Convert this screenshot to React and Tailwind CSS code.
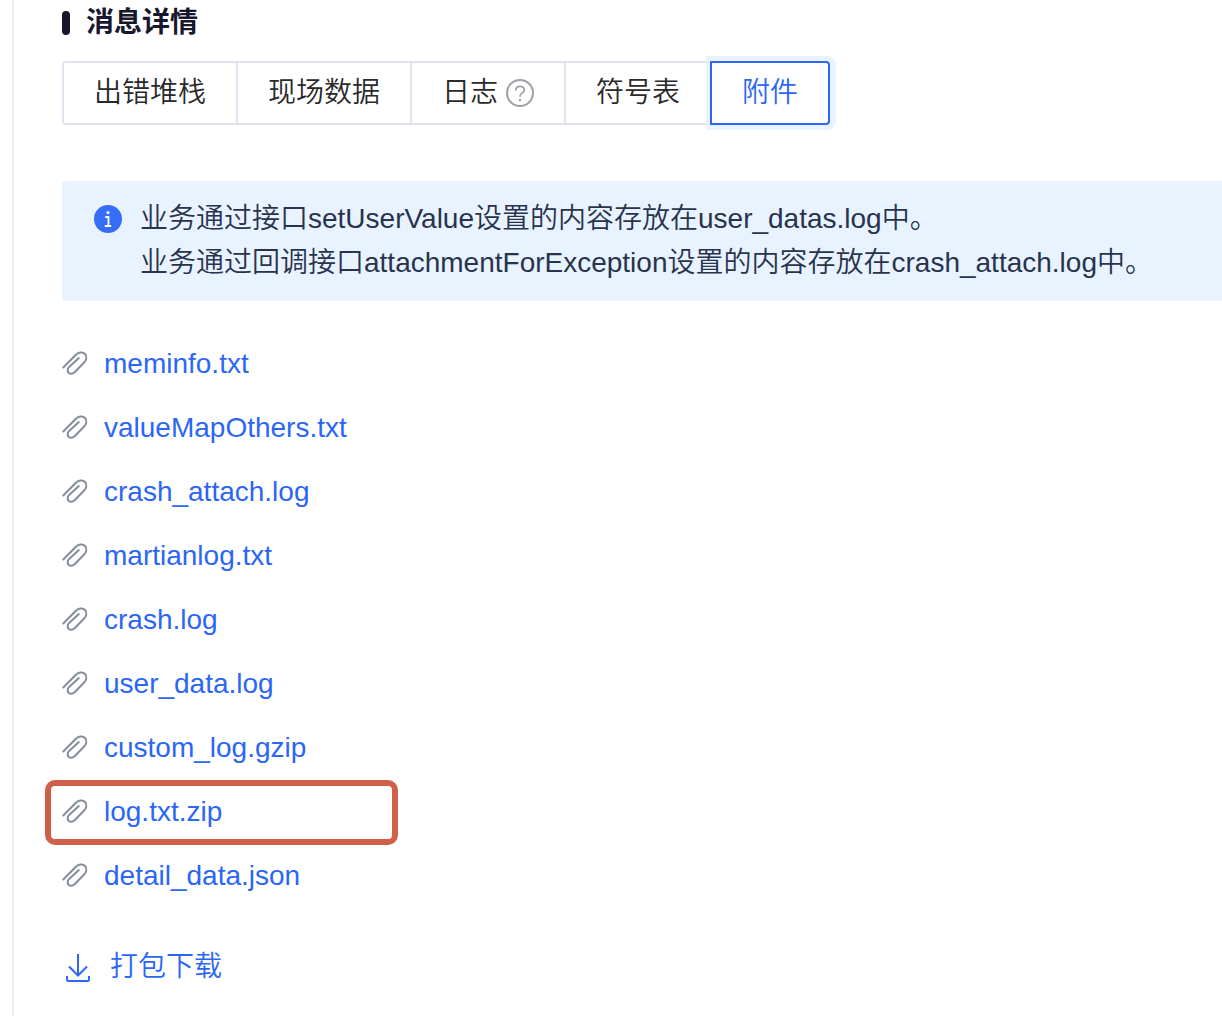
import React, { useState } from "react";

const TABS = [
  { key: "stack", label: "出错堆栈" },
  { key: "scene", label: "现场数据" },
  { key: "log", label: "日志", help: true },
  { key: "symbol", label: "符号表" },
  { key: "attachment", label: "附件" },
];

const FILES = [
  "meminfo.txt",
  "valueMapOthers.txt",
  "crash_attach.log",
  "martianlog.txt",
  "crash.log",
  "user_data.log",
  "custom_log.gzip",
  "log.txt.zip",
  "detail_data.json",
];

const HIGHLIGHTED_FILE = "log.txt.zip";

const HelpIcon = () => (
  <svg className="w-7 h-7 text-[#a0a1a7]" viewBox="0 0 28 28" fill="none" aria-hidden="true">
    <circle cx="14" cy="14" r="13" stroke="currentColor" strokeWidth="2" />
    <path
      d="M9.8 11.4C9.8 8.8 11.5 7.4 14 7.4s4.3 1.4 4.3 3.6c0 1.7-1 2.6-2.3 3.3-1.3.7-1.9 1.3-1.9 2.4v1"
      stroke="currentColor"
      strokeWidth="1.8"
    />
    <circle cx="14" cy="21" r="1.2" fill="currentColor" />
  </svg>
);

const InfoIcon = () => (
  <svg className="w-7 h-7 mt-2 shrink-0" viewBox="0 0 28 28" fill="none" aria-hidden="true">
    <circle cx="14" cy="14" r="14" fill="#356df6" />
    <circle cx="14" cy="7.6" r="1.6" fill="#fff" />
    <path d="M11.2 12h3.3v9M10.8 21h6.4" stroke="#fff" strokeWidth="1.8" />
  </svg>
);

const ClipIcon = () => (
  <svg className="w-7 h-7 shrink-0 text-[#848c9e]" viewBox="0 0 28 28" fill="none" aria-hidden="true">
    <path
      d="M.8 18 13.4 5.2C16.2 2.4 20.4 1.4 22.8 3.8c2.4 2.4 1.9 6.2-.9 9L12.8 22c-2 2-4.6 2.3-6.2.7-1.5-1.5-1.3-4 .5-5.8L17.4 7.6"
      stroke="currentColor"
      strokeWidth="2"
    />
  </svg>
);

const DownloadIcon = () => (
  <svg className="w-8 h-8 shrink-0" viewBox="0 0 32 32" fill="none" aria-hidden="true">
    <path d="M16 3v21M7 15.5l9 9 9-9" stroke="currentColor" strokeWidth="2" />
    <path d="M5 25v3.5c0 .9.6 1.5 1.5 1.5h19c.9 0 1.5-.6 1.5-1.5V25" stroke="currentColor" strokeWidth="2" />
  </svg>
);

const App = () => {
  const [activeTab, setActiveTab] = useState("attachment");

  return (
    <div className="min-h-screen bg-white pl-3 font-['Liberation_Sans','Noto_Sans_CJK_SC',sans-serif] font-[350] text-[28px] leading-[44px]">
      <main className="min-h-screen border-l-2 border-[#ececee] pl-12">
        {/* Title */}
        <h2 className="flex items-center gap-4 h-[46px] font-bold text-[#17172d]">
          <span className="w-2 h-6 rounded bg-[#17172d]" />
          消息详情
        </h2>

        {/* Tabs */}
        <div className="flex mt-[15px]">
          {TABS.map((tab) => (
            <button
              key={tab.key}
              type="button"
              onClick={() => setActiveTab(tab.key)}
              className={`flex items-center gap-2 h-16 px-[30px] -mr-0.5 border-2 first:rounded-l last:rounded-r ${
                activeTab === tab.key
                  ? "relative border-[#2b66f6] text-[#2b66f6] shadow-[1px_0_0_5px_#e8f3ff]"
                  : "border-[#dfe3f0] text-[#2a2a2a]"
              }`}
            >
              {tab.label}
              {tab.help && <HelpIcon />}
            </button>
          ))}
        </div>

        {/* Notice */}
        <div className="flex gap-[18px] mt-14 px-8 py-4 rounded-l bg-[#e8f3ff] text-[#28334d]">
          <InfoIcon />
          <div>
            <p>业务通过接口setUserValue设置的内容存放在user_datas.log中。</p>
            <p>业务通过回调接口attachmentForException设置的内容存放在crash_attach.log中。</p>
          </div>
        </div>

        {/* Attachments */}
        <ul className="mt-[31px]">
          {FILES.map((file) => (
            <li key={file} className="relative flex items-center gap-[14px] h-16">
              <ClipIcon />
              <a href="#" className="text-[#2b66f6]">
                {file}
              </a>
              {file === HIGHLIGHTED_FILE && (
                <span className="absolute top-0 -left-[17px] w-[353px] h-[65px] border-6 border-[#d1604a] rounded-[10px] pointer-events-none" />
              )}
            </li>
          ))}
        </ul>

        <a href="#" className="inline-flex items-center gap-4 mt-[37px] text-[#2b66f6]">
          <DownloadIcon />
          打包下载
        </a>
      </main>
    </div>
  );
};

export default App;
